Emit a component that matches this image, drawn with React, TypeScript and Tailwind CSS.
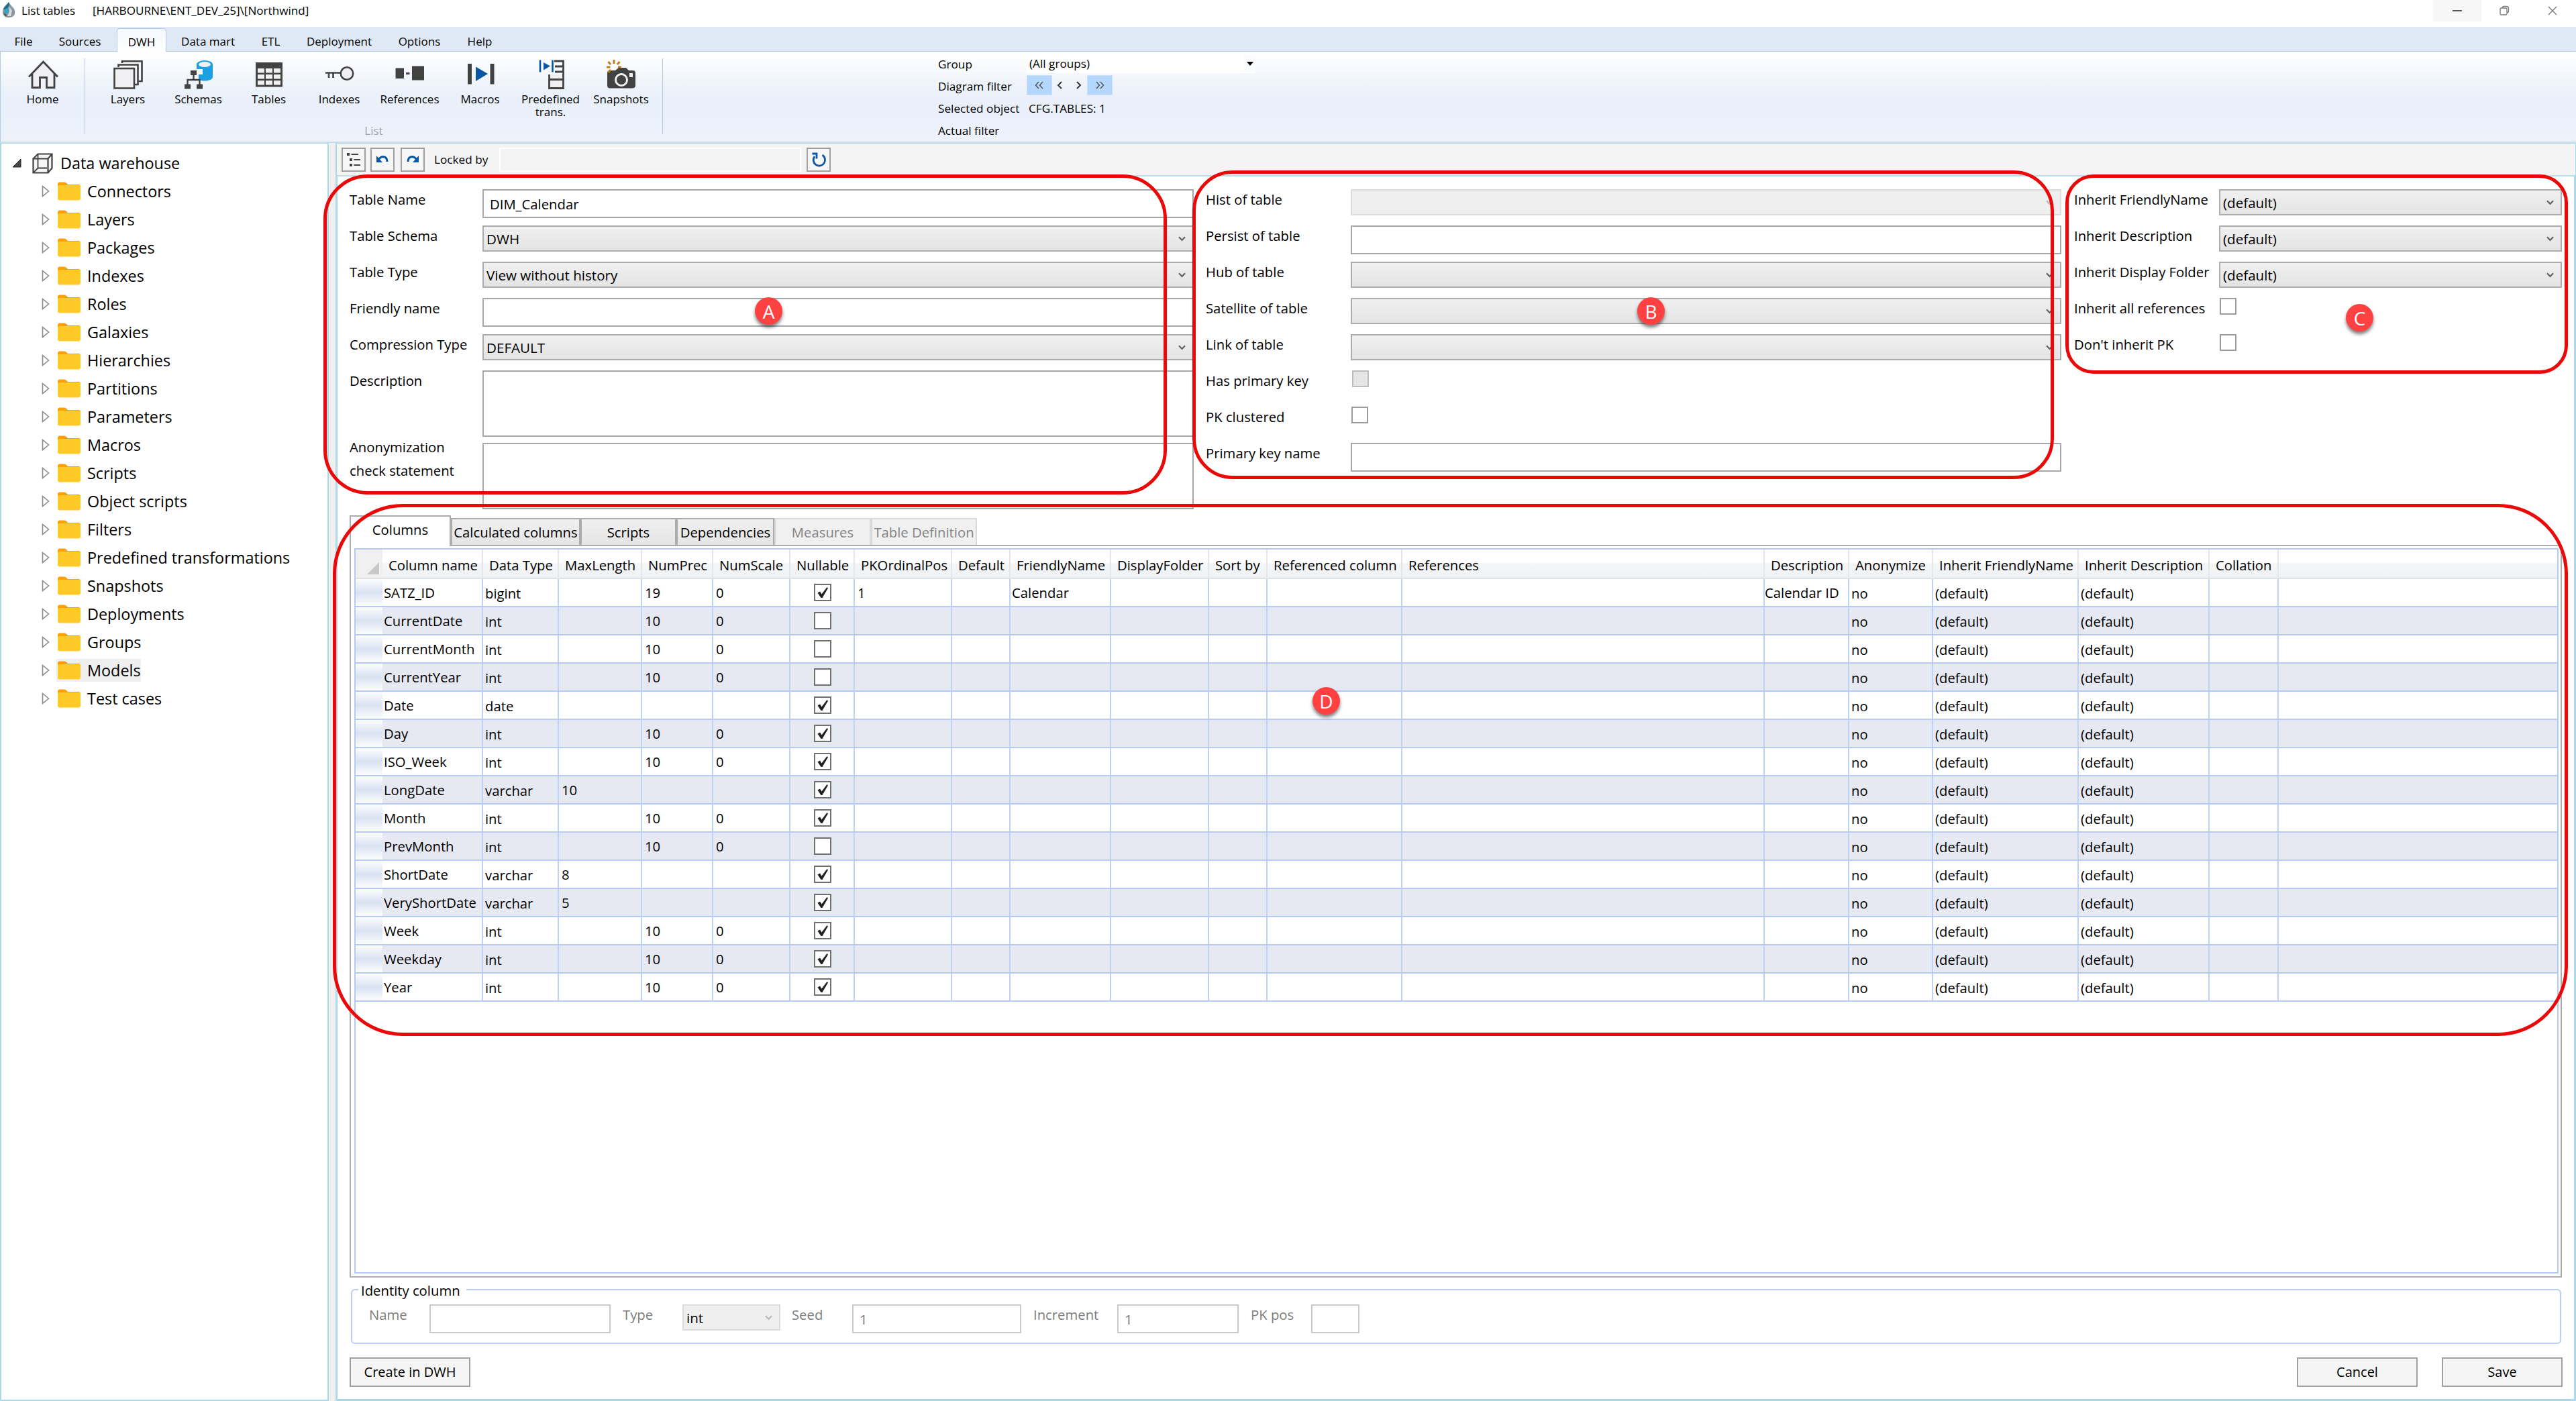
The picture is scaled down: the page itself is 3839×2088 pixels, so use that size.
import React from "react";

const GRID =
  "grid grid-cols-[40px_150px_113px_124px_106px_115px_96px_145px_87px_150px_146px_87px_201px_540px_126px_125px_217px_195px_103px_415px]";

const menu = [
  { label: "File", cls: "w-[70px]" },
  { label: "Sources", cls: "mr-[6px] w-[98px]" },
  { label: "DWH", cls: "w-[74px]", active: true },
  { label: "Data mart", cls: "w-[124px]" },
  { label: "ETL", cls: "w-[63px]" },
  { label: "Deployment", cls: "w-[141px]" },
  { label: "Options", cls: "w-[98px]" },
  { label: "Help", cls: "w-[82px]" },
];

const tree = [
  "Connectors", "Layers", "Packages", "Indexes", "Roles", "Galaxies", "Hierarchies",
  "Partitions", "Parameters", "Macros", "Scripts", "Object scripts", "Filters",
  "Predefined transformations", "Snapshots", "Deployments", "Groups", "Models", "Test cases",
];

const headers = [
  "Column name", "Data Type", "MaxLength", "NumPrec", "NumScale", "Nullable", "PKOrdinalPos",
  "Default", "FriendlyName", "DisplayFolder", "Sort by", "Referenced column", "References",
  "Description", "Anonymize", "Inherit FriendlyName", "Inherit Description", "Collation",
];

type Row = { name: string; type: string; max?: string; prec?: string; scale?: string; nullable: boolean };

const rows: Row[] = [
  { name: "SATZ_ID", type: "bigint", prec: "19", scale: "0", nullable: true },
  { name: "CurrentDate", type: "int", prec: "10", scale: "0", nullable: false },
  { name: "CurrentMonth", type: "int", prec: "10", scale: "0", nullable: false },
  { name: "CurrentYear", type: "int", prec: "10", scale: "0", nullable: false },
  { name: "Date", type: "date", nullable: true },
  { name: "Day", type: "int", prec: "10", scale: "0", nullable: true },
  { name: "ISO_Week", type: "int", prec: "10", scale: "0", nullable: true },
  { name: "LongDate", type: "varchar", max: "10", nullable: true },
  { name: "Month", type: "int", prec: "10", scale: "0", nullable: true },
  { name: "PrevMonth", type: "int", prec: "10", scale: "0", nullable: false },
  { name: "ShortDate", type: "varchar", max: "8", nullable: true },
  { name: "VeryShortDate", type: "varchar", max: "5", nullable: true },
  { name: "Week", type: "int", prec: "10", scale: "0", nullable: true },
  { name: "Weekday", type: "int", prec: "10", scale: "0", nullable: true },
  { name: "Year", type: "int", prec: "10", scale: "0", nullable: true },
];

const D = "#424242";
const BLUE = "#0857a6";

const icons: Record<string, React.ReactNode> = {
  Home: (
    <svg width="46" height="44" viewBox="0 0 46 44">
      <path d="M6 24V42H19V27H28V42H41V24L23.500 4Z" fill="#f0eff1" />
      <path d="M2 25.500L23.500 3L45 25.500M7 21V41.500H18.500V26.500H28.500V41.500H40V21" fill="none" stroke={D} strokeWidth="2.800" />
    </svg>
  ),
  Layers: (
    <svg width="44" height="44" viewBox="0 0 44 44">
      <g fill="#f0eff1" stroke={D} strokeWidth="2.600">
        <path d="M13 5V2.300H42.500V32H38" fill="none" />
        <path d="M7.500 11V7.500H36.500V37H32" fill="none" />
        <rect x="1.500" y="13" width="29.500" height="29.500" />
      </g>
    </svg>
  ),
  Schemas: (
    <svg width="44" height="44" viewBox="0 0 44 44">
      <path d="M19 6V14H28V22H22V29C24 31 27 31.500 31 31.500C38 31.500 43 29 43 26V6Z" fill="#1ba1e2" />
      <ellipse cx="31" cy="7" rx="12" ry="6" fill="#1ba1e2" />
      <ellipse cx="31" cy="7" rx="9" ry="4" fill="#f0eff1" />
      <g fill={D}>
        <rect x="10" y="16" width="9" height="7" />
        <rect x="1" y="36.500" width="9" height="7" />
        <rect x="19" y="36.500" width="9" height="7" />
      </g>
      <path d="M14.500 22V30M5.500 37V30H23.500V37" fill="none" stroke={D} strokeWidth="2.400" />
    </svg>
  ),
  Tables: (
    <svg width="44" height="44" viewBox="0 0 44 44">
      <rect x="2" y="4" width="40" height="36.500" fill={D} />
      <g fill="#f0eff1">
        {[13, 22, 31].map((y) => [5, 17, 29].map((x) => <rect key={`${x}-${y}`} x={x} y={y} width="10" height="6.500" />))}
      </g>
    </svg>
  ),
  Indexes: (
    <svg width="44" height="44" viewBox="0 0 44 44">
      <circle cx="33" cy="20.500" r="9.200" fill="#f0eff1" stroke={D} strokeWidth="2.600" />
      <path d="M1 19.500H24M6 19V27M12.500 19V27" fill="none" stroke={D} strokeWidth="2.600" />
    </svg>
  ),
  References: (
    <svg width="44" height="44" viewBox="0 0 44 44" fill={D}>
      <rect x="0.500" y="12.500" width="12.500" height="15.500" />
      <rect x="16" y="19" width="5.500" height="3" />
      <rect x="25" y="9.500" width="18" height="21" />
    </svg>
  ),
  Macros: (
    <svg width="44" height="44" viewBox="0 0 44 44">
      <rect x="3" y="6" width="6" height="30.500" fill={D} />
      <rect x="36.500" y="6" width="6" height="30.500" fill={D} />
      <path d="M15 10.500L33 21L15 32Z" fill={BLUE} />
    </svg>
  ),
  Predef: (
    <svg width="44" height="44" viewBox="0 0 44 44">
      <path d="M31 2H40.500V42.500H19.500V22M31 2H27M28 10H40M28 18H40M19 29.500H40" fill="none" stroke={D} strokeWidth="2.800" />
      <rect x="21" y="22" width="18" height="6" fill="#f0eff1" />
      <rect x="21" y="31" width="18" height="10" fill="#f0eff1" />
      <path d="M6 0.500V18.500M24.500 0.500V18.500" stroke={BLUE} strokeWidth="2.600" />
      <path d="M11 4L21 9.500L11 15.500Z" fill={BLUE} />
    </svg>
  ),
  Snapshots: (
    <svg width="44" height="44" viewBox="0 0 44 44">
      <path d="M5 16H13L18 12H29L33 16H39Q43 16 43 20V38Q43 42.500 38 42.500H5Q1 42.500 1 38V20Q1 16 5 16Z" fill={D} />
      <circle cx="22" cy="30" r="8.500" fill="none" stroke="#f0eff1" strokeWidth="3" />
      <rect x="34" y="20" width="5" height="6" fill="#f0eff1" />
      <path d="M11 0V6M2.500 3L6 7M19.500 3L16 7M0 11H5.500M17 11H22M2.500 19L6 15" stroke="#c27d1a" strokeWidth="3" />
    </svg>
  ),
};

const ribbon = [
  { key: "Layers", label: "Layers" },
  { key: "Schemas", label: "Schemas" },
  { key: "Tables", label: "Tables" },
  { key: "Indexes", label: "Indexes" },
  { key: "References", label: "References" },
  { key: "Macros", label: "Macros" },
  { key: "Predef", label: "Predefined\ntrans." },
  { key: "Snapshots", label: "Snapshots" },
];

function Chevron({ light = false }: { light?: boolean }) {
  return (
    <svg width="11" height="8" viewBox="0 0 11 8" className="mr-[10px]">
      <path d="M1 1.200L5.500 6L10 1.200" fill="none" stroke={light ? "#b8b8b8" : "#606060"} strokeWidth="2.200" />
    </svg>
  );
}

function Select({ value = "", disabled = false }: { value?: string; disabled?: boolean }) {
  return (
    <div
      className={
        disabled
          ? "flex h-[39px] w-full items-center justify-between border-2 border-[#dcdcdc] bg-[#efefef] pl-[4px]"
          : "flex h-[39px] w-full items-center justify-between border-2 border-[#acacac] bg-linear-to-b from-[#f0f0f0] to-[#e4e4e4] pl-[4px]"
      }
    >
      <span className="pt-[2px] text-[20.600px]">{value}</span>
      <Chevron light={disabled} />
    </div>
  );
}

function Input({ value = "" }: { value?: string }) {
  return <div className="flex h-[43px] w-full items-center border-2 border-[#a5a7aa] bg-white pt-[2px] pl-[9px]">{value}</div>;
}

function Check({ disabled = false }: { disabled?: boolean }) {
  return (
    <div
      className={
        disabled
          ? "ml-[2px] size-[25px] border-2 border-[#bcbcbc] bg-[#e6e6e6]"
          : "ml-[1px] size-[25px] border-2 border-[#9d9d9d] bg-white"
      }
    />
  );
}

function Field({ label, children }: { label: string; children: React.ReactNode }) {
  return (
    <div className="flex h-[54px] items-start">
      <div className="w-[216px] shrink-0 leading-[31px] whitespace-nowrap">{label}</div>
      <div className="flex-1">{children}</div>
    </div>
  );
}

function LeftField({ label, children, tall = false }: { label: string; children: React.ReactNode; tall?: boolean }) {
  return (
    <div className={tall ? "flex h-[108px] items-start" : "flex h-[54px] items-start"}>
      <div className="w-[198px] shrink-0 leading-[31px] whitespace-nowrap">{label}</div>
      <div className="flex-1">{children}</div>
    </div>
  );
}

function Cell({ children, combo = false, num = false }: { children?: React.ReactNode; combo?: boolean; num?: boolean }) {
  return (
    <div
      className={
        combo
          ? "flex items-center border-r-2 border-[#bdd2f5] pt-[3px] pl-[3px] whitespace-nowrap"
          : num
            ? "flex items-center border-r-2 border-[#bdd2f5] pt-[1px] pl-[4px] whitespace-nowrap"
            : "flex items-center border-r-2 border-[#bdd2f5] pt-[1px] pl-[2px] whitespace-nowrap"
      }
    >
      {children}
    </div>
  );
}

function GridCheck({ on }: { on: boolean }) {
  return (
    <div className="flex size-[26px] items-center justify-center border-2 border-[#707070] bg-white">
      {on && (
        <svg width="20" height="20" viewBox="0 0 20 20">
          <path d="M2.500 10.500L6 8.500L8.500 12.500L16.500 2L18 3.500L9.500 18H7.500Z" fill="#212121" />
        </svg>
      )}
    </div>
  );
}

function ToolButton({ children }: { children: React.ReactNode }) {
  return <div className="flex size-[36px] items-center justify-center border-2 border-[#a0a0a0] bg-[#f6f6f6]">{children}</div>;
}

function Badge({ letter, cls }: { letter: string; cls: string }) {
  return (
    <div className={`absolute flex size-[41px] items-center justify-center rounded-full bg-[#ff4141] text-[28px] text-white shadow-[0_4px_5px_rgba(0,0,0,0.5)] ${cls}`}>
      {letter}
    </div>
  );
}

function TitleBar() {
  return (
    <div className="flex h-[40px] items-start bg-white text-[17.100px]">
      <svg width="24" height="26" viewBox="0 0 24 26" className="mt-[2px] ml-[2px]">
        <path d="M11 1C7 6 3 8 2 14C1 20 5 25 12 24C18 24 21 20 20 14C19 9 14 7 11 1Z" fill="#8b979c" />
        <path d="M11 1C9 5 4 8 3 12L9 11L12 5Z" fill="#1f6d8c" />
        <path d="M5 13L9 9L11 14L8 19L5 17Z" fill="#2aa3c9" />
        <path d="M12 8L16 14L14 22L9 22L12 16Z" fill="#d8dee0" />
        <path d="M3 17L8 20L7 23Z" fill="#3d4a50" />
      </svg>
      <div className="ml-[6px] leading-[31px]">List tables</div>
      <div className="ml-[26px] leading-[31px]">[HARBOURNE\ENT_DEV_25]\[Northwind]</div>
      <div className="ml-auto flex h-[32px] items-center">
        <div className="flex h-[32px] w-[72px] items-center justify-center bg-[#f7f7f7]">
          <div className="h-[2px] w-[14px] bg-[#555]" />
        </div>
        <svg width="16" height="16" viewBox="0 0 16 16" className="ml-[26px]">
          <path d="M2 5.500Q2 4 3.500 4H10.500Q12 4 12 5.500V12.500Q12 14 10.500 14H3.500Q2 14 2 12.500ZM5 4Q5 1.500 8 1.500H11Q14.500 1.500 14.500 5V8Q14.500 11 12 11" fill="none" stroke="#777" strokeWidth="1.300" />
        </svg>
        <svg width="16" height="16" viewBox="0 0 16 16" className="mr-[27px] ml-[56px]">
          <path d="M2 2L14 14M14 2L2 14" stroke="#777" strokeWidth="1.400" />
        </svg>
      </div>
    </div>
  );
}

function MenuBar() {
  return (
    <div className="flex h-[37px] items-end border-b border-[#b5cae3] bg-[#dfe9f5] text-[17px]">
      {menu.map((m) => (
        <div
          key={m.label}
          className={
            m.active
              ? "-mb-px flex h-[35px] w-[74px] items-center justify-center rounded-t-[5px] border-x border-t border-[#b5cae3] bg-linear-to-b from-[#f4f8fd] to-white pt-[4px]"
              : `flex h-[33px] items-center justify-center whitespace-nowrap pt-[3px] ${m.cls}`
          }
        >
          {m.label}
        </div>
      ))}
    </div>
  );
}

function Ribbon() {
  return (
    <div className="flex h-[136px] border-b-2 border-l border-b-[#c8dbe8] border-l-[#b5cae3] bg-linear-to-b from-white via-[#e9f0f9] via-50% to-[#edf2fb] text-[17px]">
      <div className="flex w-[125px] flex-col items-center pt-[12px]">
        {icons.Home}
        <div className="mt-[3px] leading-[24px]">Home</div>
      </div>
      <div className="mt-[10px] h-[113px] w-px bg-[#b9c9df]" />
      <div className="flex w-[860px] flex-col">
        <div className="flex pl-[11px]">
          {ribbon.map((r) => (
            <div key={r.key} className="flex h-[110px] w-[105px] flex-col items-center pt-[12px]">
              {icons[r.key]}
              <div className="mt-[3px] text-center leading-[24px] whitespace-pre">
                {r.label.split("\n").map((t, i) => (
                  <div key={t} className={i ? "-mt-[5px]" : ""}>{t}</div>
                ))}
              </div>
            </div>
          ))}
        </div>
        <div className="text-center leading-[16px] text-[#a0a4aa]">List</div>
      </div>
      <div className="mt-[10px] h-[113px] w-px bg-[#b9c9df]" />
      <div className="ml-[410px] flex flex-col text-[17.200px] leading-[33px]">
        <div className="flex h-[33px]">
          <div className="w-[132px] pt-[2px]">Group</div>
          <div className="mt-[3px] flex h-[29px] w-[341px] items-center justify-between bg-white pl-[4px]">
            <span>(All groups)</span>
            <div className="flex h-[25px] w-[17px] items-center justify-center bg-[#fafcff]">
              <svg width="10" height="6" viewBox="0 0 10 6"><path d="M0 0H10L5 6Z" /></svg>
            </div>
          </div>
        </div>
        <div className="flex h-[33px]">
          <div className="w-[132px] pt-[2px]">Diagram filter</div>
          <div className="mt-[2px] flex h-[30px] w-[38px] items-center justify-center border border-[#d3e0ee] bg-[#b3d7fd]">
            <svg width="16" height="12" viewBox="0 0 16 12"><path d="M7 1L2.500 6L7 11M13 1L8.500 6L13 11" fill="none" stroke="#555" strokeWidth="1.500" /></svg>
          </div>
          <svg width="8" height="12" viewBox="0 0 8 12" className="mt-[11px] ml-[7px]"><path d="M7 1L2 6L7 11" fill="none" stroke="#333" strokeWidth="2" /></svg>
          <svg width="8" height="12" viewBox="0 0 8 12" className="mt-[11px] ml-[21px]"><path d="M1 1L6 6L1 11" fill="none" stroke="#333" strokeWidth="2" /></svg>
          <div className="mt-[2px] ml-[8px] flex h-[30px] w-[38px] items-center justify-center border border-[#d3e0ee] bg-[#b3d7fd]">
            <svg width="16" height="12" viewBox="0 0 16 12"><path d="M3 1L7.500 6L3 11M9 1L13.500 6L9 11" fill="none" stroke="#555" strokeWidth="1.500" /></svg>
          </div>
        </div>
        <div className="flex h-[33px] pt-[2px]">
          <div className="w-[135px]">Selected object</div>
          <div>CFG.TABLES: 1</div>
        </div>
        <div className="h-[33px] pt-[2px]">Actual filter</div>
      </div>
    </div>
  );
}

function Tree() {
  return (
    <div className="w-[490px] border-2 border-t border-[#add8e6] bg-white pt-[8px] text-[23.400px]">
      <div className="flex h-[42px] items-center">
        <svg width="14" height="14" viewBox="0 0 14 14" className="ml-[16px]"><path d="M13 1V13H1Z" fill="#484848" stroke="#222" /></svg>
        <svg width="31" height="31" viewBox="0 0 31 31" className="ml-[16px]">
          <g fill="none" stroke={D} strokeWidth="2.200">
            <path d="M1.500 8.500H23.500V29.500H1.500ZM1.500 8.500L8.500 1.500H29.500V22.500L23.500 29.500M23.500 8.500L29.500 1.500" fill="#f6f6f6" />
            <path d="M8.500 1.500V22.500H22M8.500 22.500L2 29" strokeWidth="1.800" />
          </g>
        </svg>
        <div className="ml-[11px] pt-[1px]">Data warehouse</div>
      </div>
      {tree.map((t) => (
        <div key={t} className="flex h-[42px] items-center pl-[60px]">
          <svg width="12" height="18" viewBox="0 0 12 18"><path d="M1.500 1.500L10.500 9L1.500 16.500Z" fill="#fff" stroke="#8a8a8a" strokeWidth="1.600" /></svg>
          <div className={t === "Models" ? "ml-[10px] flex h-[34px] items-center bg-[#efefef] pl-[2px]" : "ml-[10px] flex h-[34px] items-center pl-[2px]"}>
            <svg width="34" height="28" viewBox="0 0 34 28">
              <path d="M0 4Q0 0.500 3 0.500H10Q12 0.500 15 4H31Q34 4 34 7V14H0Z" fill="#ffa000" />
              <path d="M0 7Q0 5 3 5H31Q34 5 34 8V24Q34 27.500 31 27.500H3Q0 27.500 0 24Z" fill="#ffca28" />
            </svg>
            <div className="ml-[10px] pt-[1px]">{t}</div>
          </div>
        </div>
      ))}
    </div>
  );
}

function Toolbar() {
  return (
    <div className="flex h-[50px] items-center border border-b-2 border-l-2 border-[#add8e6] border-b-[#b9dde9] bg-[#f4f4f4] pl-[7px] text-[17.200px]">
      <ToolButton>
        <svg width="24" height="24" viewBox="0 0 24 24" fill={D}>
          <path d="M2 2H6V6H2ZM8.500 3H19V5H8.500ZM6 10H10V14H6ZM12.500 11H22V13H12.500ZM6 18H10V22H6ZM12.500 19H22V21H12.500Z" />
        </svg>
      </ToolButton>
      <div className="w-[7px]" />
      <ToolButton>
        <svg width="20" height="16" viewBox="0 0 20 16">
          <path d="M4 8Q7 3.500 11 3.500Q17 4 17 11" fill="none" stroke={BLUE} strokeWidth="3" />
          <path d="M1 2V12H10Z" fill={BLUE} />
        </svg>
      </ToolButton>
      <div className="w-[9px]" />
      <ToolButton>
        <svg width="20" height="16" viewBox="0 0 20 16">
          <path d="M16 8Q13 3.500 9 3.500Q3 4 3 11" fill="none" stroke={BLUE} strokeWidth="3" />
          <path d="M19 2V12H10Z" fill={BLUE} />
        </svg>
      </ToolButton>
      <div className="w-[111px] pl-[14px]">Locked by</div>
      <div className="h-[36px] w-[450px] border-2 border-white" />
      <div className="w-[8px]" />
      <ToolButton>
        <svg width="24" height="24" viewBox="0 0 24 24">
          <path d="M17.500 5A8.700 8.700 0 1 1 6 7" fill="none" stroke={BLUE} strokeWidth="2.800" />
          <path d="M2.500 3H9V10.500" fill="none" stroke={BLUE} strokeWidth="2.800" />
        </svg>
      </ToolButton>
    </div>
  );
}

function Form() {
  return (
    <div className="flex h-[486px]">
      <div className="w-[1258px]">
        <LeftField label="Table Name"><Input value="DIM_Calendar" /></LeftField>
        <LeftField label="Table Schema"><Select value="DWH" /></LeftField>
        <LeftField label="Table Type"><Select value="View without history" /></LeftField>
        <LeftField label="Friendly name"><Input /></LeftField>
        <LeftField label="Compression Type"><Select value="DEFAULT" /></LeftField>
        <LeftField label="Description" tall><div className="h-[99px] border-2 border-[#a5a7aa]" /></LeftField>
        <div className="flex items-start">
          <div className="-mt-[11px] w-[198px] leading-[35px]">Anonymization<br />check statement</div>
          <div className="h-[99px] flex-1 border-2 border-[#a5a7aa]" />
        </div>
      </div>
      <div className="ml-[18px] w-[1275px]">
        <Field label="Hist of table"><Select disabled /></Field>
        <Field label="Persist of table"><Input /></Field>
        <Field label="Hub of table"><Select /></Field>
        <Field label="Satellite of table"><Select /></Field>
        <Field label="Link of table"><Select /></Field>
        <Field label="Has primary key"><Check disabled /></Field>
        <Field label="PK clustered"><Check /></Field>
        <Field label="Primary key name"><Input /></Field>
      </div>
      <div className="ml-[19px] w-[727px]">
        <Field label="Inherit FriendlyName"><Select value="(default)" /></Field>
        <Field label="Inherit Description"><Select value="(default)" /></Field>
        <Field label="Inherit Display Folder"><Select value="(default)" /></Field>
        <Field label="Inherit all references"><Check /></Field>
        <Field label="Don't inherit PK"><Check /></Field>
      </div>
    </div>
  );
}

function Tabs() {
  const tab = "flex h-[40px] items-center justify-center border-2 border-b-0 border-[#acacac] bg-linear-to-b from-[#f0f0f0] to-[#e5e5e5] whitespace-nowrap";
  const off = "flex h-[40px] items-center justify-center border-2 border-b-0 border-[#d9d9d9] bg-[#f0f0f0] text-[#838383] whitespace-nowrap";
  return (
    <div className="flex h-[44px] items-end">
      <div className="relative -mb-[2px] flex h-[46px] w-[151px] items-start justify-center border-2 border-b-0 border-[#acacac] bg-white pt-[9px]">Columns</div>
      <div className={`${tab} w-[193px]`}>Calculated columns</div>
      <div className={`${tab} w-[143px]`}>Scripts</div>
      <div className={`${tab} w-[146px]`}>Dependencies</div>
      <div className={`${off} w-[144px]`}>Measures</div>
      <div className={`${off} w-[158px]`}>Table Definition</div>
    </div>
  );
}

function Grid() {
  return (
    <div className="h-[1092px] w-[3297px] border-2 border-[#acacac] bg-white p-[3px] pl-[5px]">
      <div className="h-[1081px] w-[3285px] border-2 border-[#b4cbf4]">
        <div className={`${GRID} h-[44px] border-b-2 border-[#dfe1e3] bg-linear-to-b from-white from-45% via-[#f5f6f7] via-50% to-[#f0f1f2]`}>
          <div className="flex items-end justify-end bg-[#f0f0f0] p-[5px]">
            <svg width="18" height="18" viewBox="0 0 18 18"><path d="M18 0V18H0Z" fill="#c8c8c8" /></svg>
          </div>
          {headers.map((h) => (
            <div key={h} className="flex items-center border-r-2 border-[#e4e6e7] pt-[4px] pl-[9px] whitespace-nowrap">{h}</div>
          ))}
          <div />
        </div>
        {rows.map((r, i) => (
          <div key={r.name} className={i % 2 ? `${GRID} h-[42px] border-b-2 border-[#b4cbf4] bg-[#e6e9f2]` : `${GRID} h-[42px] border-b-2 border-[#b4cbf4] bg-white`}>
            <div className="bg-linear-to-b from-[#fdfdfe] via-[#d9e2f2] to-[#fdfdfe]" />
            <Cell>{r.name}</Cell>
            <Cell combo>{r.type}</Cell>
            <Cell num>{r.max}</Cell>
            <Cell num>{r.prec}</Cell>
            <Cell num>{r.scale}</Cell>
            <div className="flex items-center justify-center border-r-2 border-[#bdd2f5] pl-[2px]"><GridCheck on={r.nullable} /></div>
            <Cell num>{i === 0 ? "1" : ""}</Cell>
            <Cell />
            <Cell>{i === 0 ? "Calendar" : ""}</Cell>
            <Cell />
            <Cell />
            <Cell />
            <Cell />
            <div className="flex items-center border-r-2 border-[#bdd2f5] whitespace-nowrap">{i === 0 ? "Calendar ID" : ""}</div>
            <Cell combo>no</Cell>
            <Cell combo>(default)</Cell>
            <Cell combo>(default)</Cell>
            <Cell />
            <div />
          </div>
        ))}
      </div>
    </div>
  );
}

function Identity() {
  const box = "flex h-[43px] items-center border-2 border-[#c9cacb] bg-white pt-[2px] pl-[9px]";
  return (
    <div className="relative mt-[17px] ml-[2px] flex h-[82px] w-[3294px] items-start rounded-[6px] border-2 border-[#b9cff5] pt-[21px] text-[#7d7d7d]">
      <div className="absolute -top-[14px] left-[9px] bg-white px-[4px] pr-[9px] leading-[28px] text-black">Identity column</div>
      <div className="w-[115px] pl-[25px] leading-[31px]">Name</div>
      <div className={`${box} w-[270px]`} />
      <div className="w-[107px] pl-[18px] leading-[31px]">Type</div>
      <div className="w-[146px] text-black"><Select value="int" disabled /></div>
      <div className="w-[107px] pl-[17px] leading-[31px]">Seed</div>
      <div className={`${box} w-[252px]`}>1</div>
      <div className="w-[143px] pl-[18px] leading-[31px]">Increment</div>
      <div className={`${box} w-[181px]`}>1</div>
      <div className="w-[108px] pl-[18px] leading-[31px]">PK pos</div>
      <div className={`${box} w-[72px]`} />
    </div>
  );
}

export default function App() {
  const btn = "flex h-[44px] w-[180px] items-center justify-center border-2 border-[#a0a0a0] bg-[#f5f5f5] text-[20px]";
  return (
    <div className="relative flex h-[2088px] w-[3839px] flex-col overflow-hidden bg-[#f0f0f0] font-['Open_Sans',sans-serif] text-[20.300px] leading-none text-black">
      <TitleBar />
      <MenuBar />
      <Ribbon />
      <div className="flex h-[1875px]">
        <Tree />
        <div className="ml-[10px] flex w-[3339px] flex-col">
          <Toolbar />
          <div className="flex-1 border-3 border-t-0 border-[#add8e6] bg-white pt-[19px] pl-[18px]">
            <Form />
            <Tabs />
            <Grid />
            <Identity />
            <div className="mt-[20px] flex w-[3298px] items-center">
              <div className={btn}>Create in DWH</div>
              <div className={`${btn} ml-auto`}>Cancel</div>
              <div className={`${btn} ml-[36px]`}>Save</div>
            </div>
          </div>
        </div>
      </div>

      <div className="absolute top-[260px] left-[482px] h-[477px] w-[1257px] rounded-[66px] border-5 border-[#ea0808]" />
      <div className="absolute top-[254px] left-[1777px] h-[460px] w-[1284px] rounded-[60px] border-5 border-[#ea0808]" />
      <div className="absolute top-[260px] left-[3078px] h-[297px] w-[749px] rounded-[42px] border-5 border-[#ea0808]" />
      <div className="absolute top-[751px] left-[496px] h-[793px] w-[3331px] rounded-[104px] border-5 border-[#ea0808]" />
      <Badge letter="A" cls="top-[443px] left-[1125px]" />
      <Badge letter="B" cls="top-[443px] left-[2440px]" />
      <Badge letter="C" cls="top-[453px] left-[3496px]" />
      <Badge letter="D" cls="top-[1024px] left-[1956px]" />
    </div>
  );
}
